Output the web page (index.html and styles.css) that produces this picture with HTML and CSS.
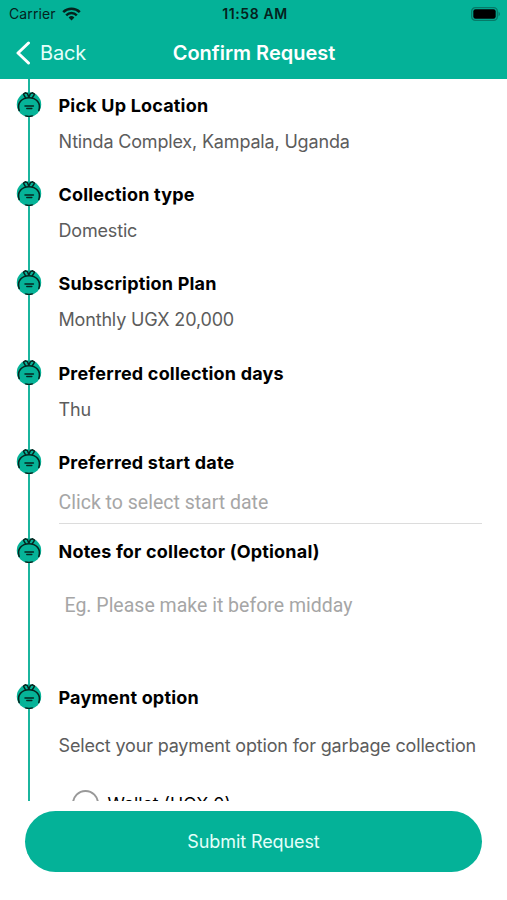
FILE: index.html
```html
<!DOCTYPE html>
<html lang="en">
<head>
    <meta charset="UTF-8">
    <meta name="viewport" content="width=device-width, initial-scale=1.0">
    <title>Confirm Request</title>
    <link rel="stylesheet" href="styles.css">
</head>
<body>
    <!-- Shared step marker -->
    <svg class="sprite" width="0" height="0">
        <symbol id="bag" viewBox="0 0 26 26">
            <circle cx="13" cy="13.500" r="12.2" fill="#06b398"/>
            <g fill="none" stroke="#06261f" stroke-linecap="round" stroke-linejoin="round">
                <path stroke-width="1.6" d="M3.200 19.500C.6 12 6 6.800 13 6.800S25.400 12 22.800 19.500"/>
                <path stroke-width="1.5" d="M9.600 6.800 7.400 3.200 9.200 1.800 11.400 2.600 12.800 6.200 14.400 2.600 16.600 1.800 18.600 3.200 16.200 6.800"/>
                <path stroke-width="1.5" d="M9 14.900h8.400M10.800 17.500h5"/>
                <path stroke-width="1.5" d="M9.600 24.900q3.400 1 6.800 0"/>
            </g>
        </symbol>
    </svg>

    <header class="header">
        <div class="status-bar">
            <div class="carrier">
                <span>Carrier</span>
                <svg class="wifi" width="19" height="14" viewBox="0 0 19 14">
                    <g fill="none" stroke="#05221d" stroke-width="2.5">
                        <path d="M1.200 5.100a11.800 11.800 0 0 1 16.600 0"/>
                        <path d="M4.200 8.300a7.500 7.500 0 0 1 10.600 0"/>
                    </g>
                    <path fill="#05221d" d="M9.500 13.500 6.600 10.500a4.100 4.100 0 0 1 5.800 0z"/>
                </svg>
            </div>
            <div class="clock">11:58 AM</div>
            <svg class="battery" width="30" height="14" viewBox="0 0 30 14">
                <rect x=".7" y=".7" width="25.600" height="12.600" rx="3.600" fill="none" stroke="#067a68" stroke-width="1.300"/>
                <rect x="2.300" y="2.300" width="22.400" height="9.400" rx="2.200" fill="#000"/>
                <path fill="#067a68" d="M27.500 4.600q3 2.400 0 4.800z"/>
            </svg>
        </div>
        <div class="nav-bar">
            <a class="back">
                <svg width="16" height="24" viewBox="0 0 16 24">
                    <path d="M13.500 2 3 12l10.500 10" fill="none" stroke="#fff" stroke-width="3" stroke-linecap="round" stroke-linejoin="round"/>
                </svg>
                <span>Back</span>
            </a>
            <h1 class="nav-title">Confirm Request</h1>
        </div>
    </header>

    <main class="timeline">
        <section class="step">
            <svg class="marker"><use href="#bag"/></svg>
            <div class="step-body">
                <h2>Pick Up Location</h2>
                <p>Ntinda Complex, Kampala, Uganda</p>
            </div>
        </section>
        <section class="step">
            <svg class="marker"><use href="#bag"/></svg>
            <div class="step-body">
                <h2>Collection type</h2>
                <p>Domestic</p>
            </div>
        </section>
        <section class="step">
            <svg class="marker"><use href="#bag"/></svg>
            <div class="step-body">
                <h2>Subscription Plan</h2>
                <p>Monthly UGX 20,000</p>
            </div>
        </section>
        <section class="step">
            <svg class="marker"><use href="#bag"/></svg>
            <div class="step-body">
                <h2>Preferred collection days</h2>
                <p>Thu</p>
            </div>
        </section>
        <section class="step">
            <svg class="marker"><use href="#bag"/></svg>
            <div class="step-body">
                <h2>Preferred start date</h2>
                <div class="date-field">Click to select start date</div>
            </div>
        </section>
        <section class="step step-notes">
            <svg class="marker"><use href="#bag"/></svg>
            <div class="step-body">
                <h2>Notes for collector (Optional)</h2>
                <div class="notes-field">Eg. Please make it before midday</div>
            </div>
        </section>
        <section class="step step-payment">
            <svg class="marker"><use href="#bag"/></svg>
            <div class="step-body">
                <h2>Payment option</h2>
                <p>Select your payment option for garbage collection</p>
                <div class="radio-row">
                    <span class="radio"></span>
                    <span>Wallet (UGX 0)</span>
                </div>
            </div>
        </section>
    </main>

    <footer class="footer">
        <button class="btn-submit">Submit Request</button>
    </footer>
</body>
</html>
```

FILE: styles.css
```css
* {
    box-sizing: border-box;
}
body {
    margin: 0;
    height: 900px;
    display: flex;
    flex-direction: column;
    overflow: hidden;
    background-color: #fff;
    font-family: Inter, 'Liberation Sans', sans-serif;
    color: #000;
}
.sprite {
    position: absolute;
}

/* Header */
.header {
    flex: none;
    height: 79px;
    background-color: #04b298;
}
.status-bar {
    display: grid;
    grid-template-columns: 1fr auto 1fr;
    align-items: center;
    height: 27px;
    padding: 0 6px 0 9px;
    font-size: 14px;
    color: #05221d;
}
.carrier {
    display: flex;
    align-items: center;
    gap: 6px;
    letter-spacing: 0.1px;
}
.clock {
    font-weight: 600;
    letter-spacing: 0.6px;
}
.battery {
    justify-self: end;
}
.nav-bar {
    display: grid;
    grid-template-columns: 1fr auto 1fr;
    align-items: center;
    height: 51px;
    padding: 0 14px 0 15px;
    color: #fff;
}
.back {
    display: flex;
    align-items: center;
    gap: 9px;
    font-size: 20px;
    letter-spacing: -0.2px;
    color: #e4fffa;
}
.nav-title {
    margin: 0;
    font-size: 20px;
    font-weight: 600;
}

/* Timeline */
.timeline {
    position: relative;
    flex: none;
    height: 722px;
    padding: 14px 25px 0 16px;
    overflow: hidden;
}
.timeline::before {
    content: '';
    position: absolute;
    top: 0;
    bottom: 0;
    left: 28px;
    width: 2px;
    background-color: #1bb59e;
}
.step {
    position: relative;
    display: flex;
    gap: 16.5px;
    height: 89.2px;
}
.step-notes {
    height: 146.5px;
}
.step-payment {
    height: 200px;
}
.marker {
    flex: none;
    width: 26px;
    height: 26px;
    margin-top: -2px;
}
.step-body {
    flex: 1;
    min-width: 0;
    white-space: nowrap;
}
.step h2 {
    margin: 0;
    font-size: 18px;
    font-weight: 700;
    line-height: 25px;
    letter-spacing: 0.19px;
}
.step p {
    margin: 11px 0 0;
    font-size: 18px;
    line-height: 25px;
    letter-spacing: -0.17px;
    color: #5c5c5c;
}
.date-field {
    height: 43px;
    margin-top: 6px;
    padding-top: 5px;
    border-bottom: 1px solid #dcdcdc;
    font-family: Roboto, sans-serif;
    font-size: 19.5px;
    line-height: 34px;
    color: #a6a6a6;
}
.notes-field {
    margin-top: 25px;
    padding-left: 6px;
    font-family: Roboto, sans-serif;
    font-size: 19.5px;
    line-height: 34px;
    color: #a6a6a6;
}
.step-payment p {
    margin-top: 23px;
}
.radio-row {
    display: flex;
    align-items: center;
    gap: 9px;
    height: 28px;
    margin: 31px 0 0 13px;
    font-size: 17.7px;
}
.radio {
    width: 27px;
    height: 27px;
    border: 2px solid #999;
    border-radius: 50%;
}

/* Footer */
.footer {
    padding: 10px 25px 0;
}
.btn-submit {
    display: block;
    width: 100%;
    height: 61px;
    border: none;
    border-radius: 31px;
    background-color: #04b298;
    color: #e4fffa;
    font-family: inherit;
    font-size: 18px;
    letter-spacing: -0.1px;
    cursor: pointer;
}
```
